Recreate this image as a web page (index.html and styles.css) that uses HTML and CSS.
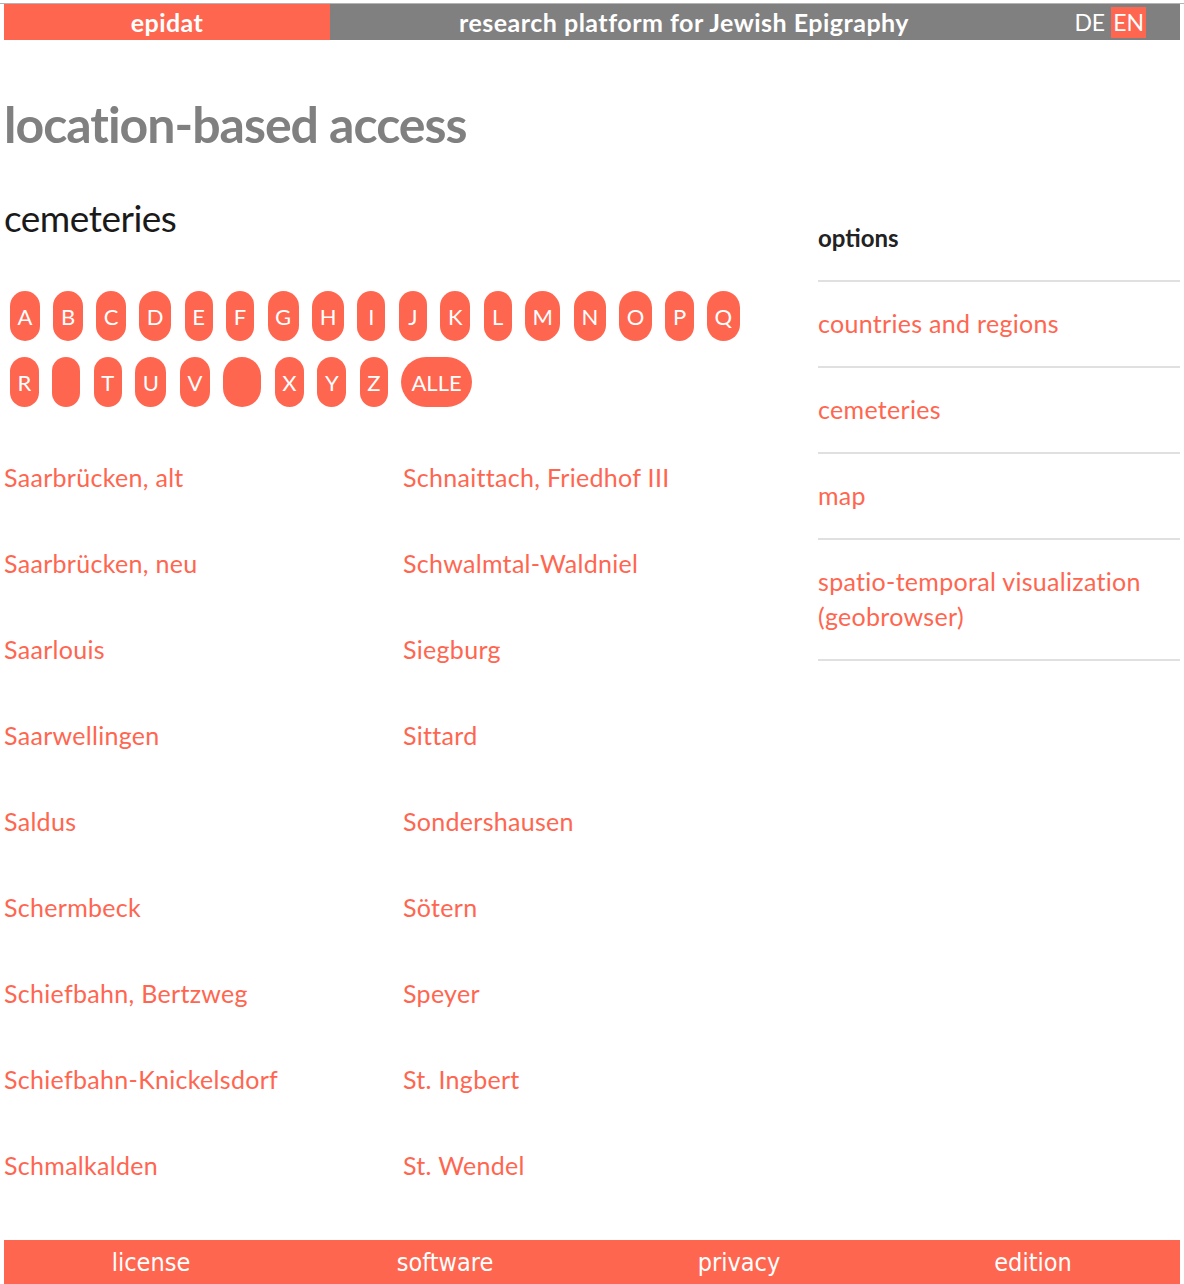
FILE: index.html
```html
<!DOCTYPE html>
<html lang="en">
<head>
<meta charset="utf-8">
<title>epidat – location-based access</title>
<link rel="stylesheet" href="styles.css">
</head>
<body>
<div class="page">
  <header class="topbar">
    <a class="brand" href="#">epidat</a>
    <div class="tagline">research platform for Jewish Epigraphy</div>
    <div class="lang"><a href="#" class="lang-item">DE</a><a href="#" class="lang-item active">EN</a></div>
  </header>

  <h1 class="title">location-based access</h1>

  <div class="layout">
    <main class="main">
      <h2 class="subtitle">cemeteries</h2>
      <nav class="letters">
        <a class="letter" href="#">A</a><a class="letter" href="#">B</a><a class="letter" href="#">C</a><a class="letter" href="#">D</a><a class="letter" href="#">E</a><a class="letter" href="#">F</a><a class="letter" href="#">G</a><a class="letter" href="#">H</a><a class="letter" href="#">I</a><a class="letter" href="#">J</a><a class="letter" href="#">K</a><a class="letter" href="#">L</a><a class="letter" href="#">M</a><a class="letter" href="#">N</a><a class="letter" href="#">O</a><a class="letter" href="#">P</a><a class="letter" href="#">Q</a>
        <a class="letter" href="#">R</a><a class="letter current" href="#">S</a><a class="letter" href="#">T</a><a class="letter" href="#">U</a><a class="letter" href="#">V</a><a class="letter current" href="#">W</a><a class="letter" href="#">X</a><a class="letter" href="#">Y</a><a class="letter" href="#">Z</a><a class="letter all" href="#">ALLE</a>
      </nav>
      <ul class="places">
        <li><a href="#">Saarbrücken, alt</a></li>
        <li><a href="#">Schnaittach, Friedhof III</a></li>
        <li><a href="#">Saarbrücken, neu</a></li>
        <li><a href="#">Schwalmtal-Waldniel</a></li>
        <li><a href="#">Saarlouis</a></li>
        <li><a href="#">Siegburg</a></li>
        <li><a href="#">Saarwellingen</a></li>
        <li><a href="#">Sittard</a></li>
        <li><a href="#">Saldus</a></li>
        <li><a href="#">Sondershausen</a></li>
        <li><a href="#">Schermbeck</a></li>
        <li><a href="#">Sötern</a></li>
        <li><a href="#">Schiefbahn, Bertzweg</a></li>
        <li><a href="#">Speyer</a></li>
        <li><a href="#">Schiefbahn-Knickelsdorf</a></li>
        <li><a href="#">St. Ingbert</a></li>
        <li><a href="#">Schmalkalden</a></li>
        <li><a href="#">St. Wendel</a></li>
      </ul>
    </main>
    <aside class="sidebar">
      <h3 class="options">options</h3>
      <ul class="menu">
        <li><a href="#">countries and regions</a></li>
        <li><a href="#">cemeteries</a></li>
        <li><a href="#">map</a></li>
        <li><a href="#">spatio-temporal visualization (geobrowser)</a></li>
      </ul>
    </aside>
  </div>

  <footer class="footer">
    <a href="#">license</a>
    <a href="#">software</a>
    <a href="#">privacy</a>
    <a href="#">edition</a>
  </footer>
</div>
</body>
</html>
```

FILE: styles.css
```css
html, body {
  margin: 0;
  padding: 0;
  background: #fff;
}
body {
  padding-top: 3px;
  font-family: "Lato", "Open Sans", sans-serif;
  color: #222;
}
a { text-decoration: none; }
ul { list-style: none; margin: 0; padding: 0; }

.page {
  border-top: 1px solid #b4b4b4;
  padding: 0 4px;
}

.topbar {
  display: flex;
  height: 36px;
  background: #808080;
  align-items: stretch;
}
.brand {
  width: 326px;
  background: #ff6650;
  color: #fff;
  font-weight: 700;
  font-size: 25px;
  letter-spacing: 0.4px;
  display: flex;
  align-items: center;
  justify-content: center;
}
.tagline {
  flex: 1;
  display: flex;
  align-items: center;
  justify-content: center;
  color: #fff;
  font-weight: 700;
  font-size: 25px;
  letter-spacing: 0.5px;
}
.lang {
  width: 142px;
  display: flex;
  align-items: center;
  justify-content: flex-end;
  padding-right: 34px;
  box-sizing: border-box;
  gap: 4px;
}
.lang-item {
  color: #fff;
  font-size: 23px;
  line-height: 31px;
  padding: 0 2px;
}
.lang-item.active {
  background: #ff6650;
}

.title {
  margin: 54px 0 0;
  font-size: 50px;
  line-height: 60px;
  font-weight: 700;
  color: #808080;
  letter-spacing: -1px;
}

.layout {
  display: flex;
  gap: 16px;
}
.main {
  flex: 1;
}
.sidebar {
  width: 362px;
}

.subtitle {
  margin: 42px 0 0;
  font-size: 37px;
  line-height: 44px;
  font-weight: 400;
  color: #1a1a1a;
  letter-spacing: -0.5px;
}

.letters {
  display: flex;
  flex-wrap: wrap;
  gap: 16px 13.5px;
  margin: 51px 0 0 6px;
  width: 760px;
}
.letter {
  height: 50px;
  min-width: 13px;
  padding: 0 7.5px;
  border-radius: 25px;
  background: #ff6650;
  color: #fff;
  font-size: 22px;
  display: flex;
  align-items: center;
  justify-content: center;
}
.letter.current {
  color: #ff6650;
}
.letter.all {
  padding: 0 10px;
}

.places {
  display: grid;
  grid-template-columns: 1fr 1fr;
  margin-top: 27px;
}
.places li {
  height: 86px;
  display: flex;
  align-items: center;
}
.places a {
  color: #ff6650;
  font-size: 25px;
  letter-spacing: 0.3px;
}

.options {
  margin: 40px 0 0;
  height: 88px;
  box-sizing: border-box;
  display: flex;
  align-items: center;
  font-size: 24px;
  font-weight: 700;
  color: #222;
  border-bottom: 2px solid #e0e0e0;
}
.menu li {
  border-bottom: 2px solid #e0e0e0;
  padding: 24px 0 25px;
  font-size: 25px;
  line-height: 35px;
}
.menu a {
  color: #ff6650;
  letter-spacing: 0.3px;
}

.footer {
  display: flex;
  margin-top: 32px;
  height: 48px;
  background: #ff6650;
}
.footer a {
  flex: 1;
  display: flex;
  align-items: center;
  justify-content: center;
  padding-bottom: 4px;
  color: #fff;
  font-family: "DejaVu Sans Condensed", "DejaVu Sans", sans-serif;
  font-stretch: condensed;
  font-size: 25px;
}
```
